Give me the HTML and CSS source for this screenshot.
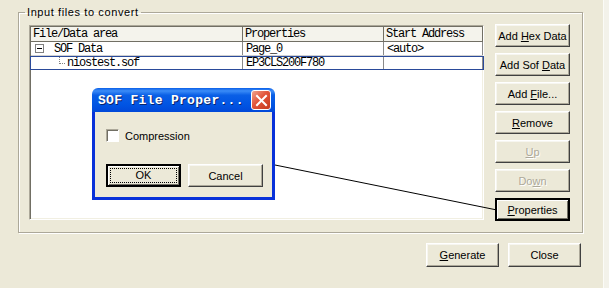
FILE: index.html
```html
<!DOCTYPE html>
<html lang="en">
<head>
  <meta charset="UTF-8">
  <title>Convert Programming Files</title>
  <link rel="stylesheet" href="styles.css">
</head>
<body>
  <div class="screen">
    <div class="main">
      <fieldset class="group">
        <legend>Input files to convert</legend>
        <div class="group-body">
          <div class="listview">
            <div class="lv-head">
              <div class="col c1">File/Data area</div>
              <div class="col c2">Properties</div>
              <div class="col c3">Start Address</div>
            </div>
            <div class="lv-row">
              <div class="col c1"><span class="expander"></span>SOF Data</div>
              <div class="col c2">Page_0</div>
              <div class="col c3">&lt;auto&gt;</div>
            </div>
            <div class="lv-row selected">
              <div class="col c1 child"><span class="branch"></span>niostest.sof</div>
              <div class="col c2">EP3CLS200F780</div>
              <div class="col c3"></div>
            </div>
          </div>
          <div class="side-buttons">
            <button class="btn">Add <u>H</u>ex Data</button>
            <button class="btn">Add Sof <u>D</u>ata</button>
            <button class="btn">Add <u>F</u>ile...</button>
            <button class="btn"><u>R</u>emove</button>
            <button class="btn" disabled><u>U</u>p</button>
            <button class="btn" disabled>Do<u>w</u>n</button>
            <button class="btn default"><u>P</u>roperties</button>
          </div>
        </div>
      </fieldset>
      <div class="footer">
        <button class="btn wide"><u>G</u>enerate</button>
        <button class="btn wide">Close</button>
      </div>
    </div>
    <div class="edge"></div>
  </div>

  <div class="dialog">
    <div class="titlebar">
      <span class="title">SOF File Proper...</span>
      <span class="close-x">
        <svg width="13" height="13" viewBox="0 0 13 13"><path d="M2 2 L11 11 M11 2 L2 11" stroke="#fff" stroke-width="2" stroke-linecap="square"/></svg>
      </span>
    </div>
    <div class="dialog-body">
      <label class="check"><span class="box"></span>Compression</label>
      <div class="dialog-buttons">
        <button class="btn default"><span class="focus">OK</span></button>
        <button class="btn">Cancel</button>
      </div>
    </div>
  </div>

  <svg class="pointer" width="609" height="288">
    <line x1="275" y1="165" x2="497" y2="210" stroke="#000" stroke-width="1"/>
  </svg>
</body>
</html>
```

FILE: styles.css
```css
* {
  box-sizing: border-box;
}

body {
  margin: 0;
  width: 609px;
  height: 288px;
  overflow: hidden;
  position: relative;
  background: #ece9d8;
  font-family: 'Liberation Sans', Arial, sans-serif;
  font-size: 11px;
  color: #000;
}

.screen {
  display: grid;
  grid-template-columns: 603px 6px;
  height: 288px;
}

.edge {
  background: #f3f2ea;
  border-left: 1px solid #fbfbf7;
}

.group {
  margin: 6px 0 0 18px;
  width: 565px;
  height: 227px;
  padding: 6px 11px 0 10px;
  border: 1px solid #aca899;
  box-shadow: 1px 1px 0 #fff, inset 1px 1px 0 #fff;
  border-radius: 0;
}

.group legend {
  padding: 0 2px;
  margin-left: -4px;
  line-height: 12px;
  letter-spacing: 0.6px;
  color: #000;
}

.group-body {
  display: flex;
  gap: 11px;
  align-items: flex-start;
}

.listview {
  width: 455px;
  height: 195px;
  margin-top: 1px;
  background: #fff;
  border: 1px solid;
  border-color: #aca899 #fff #fff #aca899;
  box-shadow: inset 1px 1px 0 #716f64, inset -1px -1px 0 #f1efe2;
  font-family: 'Liberation Mono', 'Courier New', monospace;
  font-size: 12px;
  letter-spacing: -1.2px;
  padding: 1px 0 0 1px;
}

.lv-head,
.lv-row {
  display: flex;
  height: 14px;
  line-height: 14px;
}

.lv-head {
  background: #f4f3ec;
  border-bottom: 1px solid #716f64;
  height: 15px;
}

.lv-head .col {
  border-right: 1px solid #716f64;
  padding-left: 2px;
}

.col {
  white-space: nowrap;
}

.c1 { width: 212px; }
.c2 { width: 141px; }
.c3 { width: 99px; }

.lv-row .col {
  border-right: 1px solid #8a8a8a;
  padding-left: 3px;
}

.lv-row {
  border-bottom: 1px solid #d0d0d0;
}

.lv-row .c1 {
  display: flex;
  align-items: center;
}

.expander {
  width: 9px;
  height: 9px;
  border: 1px solid #808080;
  margin: 0 10px 0 1px;
  position: relative;
  flex: none;
}

.expander::after {
  content: "";
  position: absolute;
  left: 1px;
  top: 3px;
  width: 5px;
  height: 1px;
  background: #000;
}

.branch {
  width: 6px;
  height: 7px;
  margin: 0 2px 5px 25px;
  border-left: 1px dotted #808080;
  border-bottom: 1px dotted #808080;
  flex: none;
}

.lv-row.selected {
  height: 14px;
  line-height: 12px;
  border: 1px solid #2a4a9a;
  margin-left: -1px;
  width: 454px;
}

.side-buttons {
  display: flex;
  flex-direction: column;
  gap: 6px;
}

.btn {
  width: 75px;
  height: 23px;
  padding: 0;
  font-family: 'Liberation Sans', Arial, sans-serif;
  font-size: 11px;
  color: #000;
  background: #ece9d8;
  border: 1px solid;
  border-color: #fff #404040 #404040 #fff;
  box-shadow: inset -1px -1px 0 #aca899, inset 1px 1px 0 #f7f6f0;
}

.btn:disabled {
  color: #aca899;
  text-shadow: 1px 1px 0 #fff;
}

.btn.default {
  border-width: 2px;
  border-color: #000;
  box-shadow: inset 1px 1px 0 #fff, inset -1px -1px 0 #716f64;
}

.footer {
  display: flex;
  justify-content: flex-end;
  gap: 9px;
  margin-top: 10px;
  padding-right: 22px;
}

.wide {
  width: 73px;
  height: 24px;
}

.dialog {
  position: absolute;
  left: 92px;
  top: 88px;
  width: 183px;
  height: 112px;
  display: flex;
  flex-direction: column;
}

.titlebar {
  height: 24px;
  border-radius: 6px 6px 0 0;
  background: linear-gradient(#0a5fe8 0%, #3b8cf7 12%, #0a5fe6 30%, #0054e3 70%, #0148d8 100%);
  display: flex;
  align-items: center;
  justify-content: space-between;
  padding: 0 4px 0 6px;
}

.title {
  font-family: 'Liberation Mono', 'Courier New', monospace;
  font-weight: bold;
  font-size: 13px;
  letter-spacing: 0.3px;
  color: #fff;
  text-shadow: 1px 1px 0 #0a246a;
  white-space: nowrap;
}

.close-x {
  width: 20px;
  height: 20px;
  border: 1px solid #fff;
  border-radius: 3px;
  background: linear-gradient(135deg, #f0a58f, #e2553a 45%, #c53a1e);
  display: flex;
  align-items: center;
  justify-content: center;
}

.dialog-body {
  flex: 1;
  background: #ece9d8;
  border: 3px solid #0831d9;
  border-top: none;
  padding: 17px 0 0 11px;
}

.check {
  display: flex;
  align-items: center;
  gap: 6px;
  height: 13px;
}

.check .box {
  width: 13px;
  height: 13px;
  background: #fff;
  border: 1px solid;
  border-color: #aca899 #fff #fff #aca899;
  box-shadow: inset 1px 1px 0 #716f64;
}

.dialog-buttons {
  display: flex;
  gap: 7px;
  margin-top: 22px;
}

.dialog-buttons .btn {
  width: 75px;
  height: 23px;
}

.focus {
  display: block;
  margin: 1px 2px;
  height: 15px;
  line-height: 13px;
  border: 1px dotted #000;
}

.pointer {
  position: absolute;
  left: 0;
  top: 0;
  pointer-events: none;
}
```
